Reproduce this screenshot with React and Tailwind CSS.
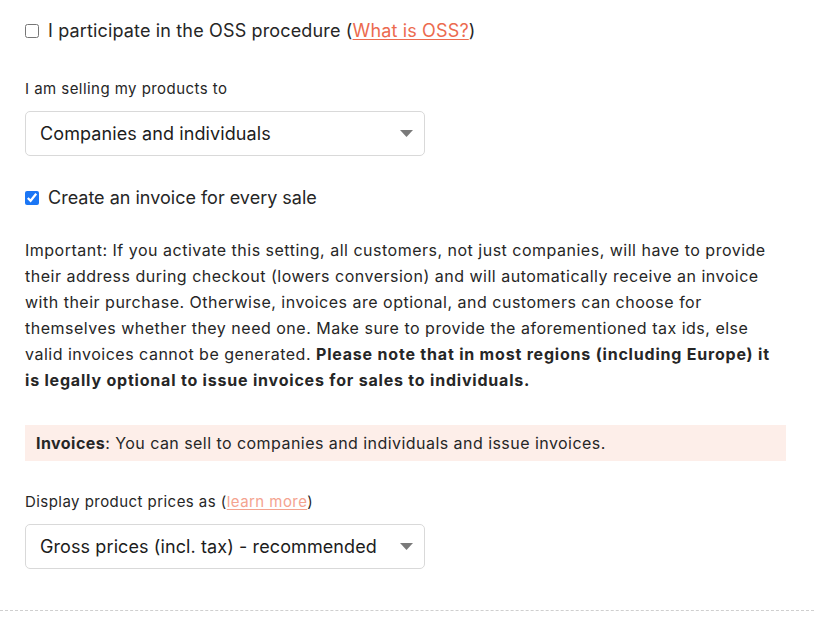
import React from "react";

function Caret() {
  return (
    <svg width="13" height="7" viewBox="0 0 13 7" className="shrink-0">
      <path d="M0 0 H13 L6.5 7 Z" fill="#7a7a7a" />
    </svg>
  );
}

function SelectBox({ value }) {
  return (
    <div className="flex h-[45px] w-[400px] items-center justify-between rounded-[5px] border border-[#d9d9d9] bg-white pl-[14px] pr-[11px] text-[18px] tracking-[0.1px] text-[#1c1c1c]">
      <span>{value}</span>
      <Caret />
    </div>
  );
}

export default function App() {
  return (
    <div
      className="relative h-[620px] w-[814px] overflow-hidden bg-white text-[#262626]"
      style={{ fontFamily: "Inter, 'Noto Sans', sans-serif" }}
    >
      <div className="w-[786px] pl-[25px] pt-[19px]">
        <label className="flex items-center gap-[9px] text-[18px] leading-[24px] tracking-[0.15px]">
          <input
            type="checkbox"
            className="m-0 h-[14px] w-[14px] accent-[#1b76f5]"
          />
          <span>
            I participate in the OSS procedure (
            <a className="text-[#ec6b4f] underline underline-offset-2">What is OSS?</a>)
          </span>
        </label>

        <div className="mt-[36px] text-[15px] leading-[20px] tracking-[0.45px]">I am selling my products to</div>
        <div className="mt-[12px]">
          <SelectBox value="Companies and individuals" />
        </div>

        <label className="mt-[30px] flex items-center gap-[9px] text-[18px] leading-[24px]">
          <input
            type="checkbox"
            defaultChecked
            className="m-0 h-[14px] w-[14px] accent-[#1b76f5]"
          />
          <span>Create an invoice for every sale</span>
        </label>

        <p className="mt-[27px] text-[16px] leading-[26px] tracking-[0.5px]">
          Important: If you activate this setting, all customers, not just companies, will have to provide their address during checkout (lowers conversion) and will automatically receive an invoice with their purchase. Otherwise, invoices are optional, and customers can choose for themselves whether they need one. Make sure to provide the aforementioned tax ids, else valid invoices cannot be generated.{" "}
          <strong className="font-bold tracking-[0.8px]">
            Please note that in most regions (including Europe) it is legally optional to issue invoices for sales to individuals.
          </strong>
        </p>

        <div className="mt-[32px] flex h-[36px] items-center bg-[#fdeee9] px-[11px] text-[16px] tracking-[0.45px]">
          <span>
            <strong className="font-bold">Invoices</strong>: You can sell to companies and individuals and issue invoices.
          </span>
        </div>

        <div className="mt-[31px] text-[15px] leading-[20px] tracking-[0.45px]">
          Display product prices as (
          <a className="text-[#f4a38f] underline underline-offset-2">learn more</a>)
        </div>
        <div className="mt-[12px]">
          <SelectBox value="Gross prices (incl. tax) - recommended" />
        </div>
      </div>

      <div className="mt-[41px] w-full border-t border-dashed border-[#cfcfcf]" />
    </div>
  );
}
